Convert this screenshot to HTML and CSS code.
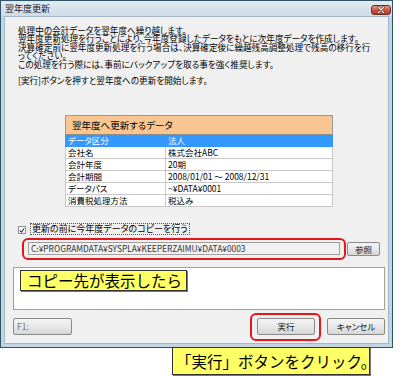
FILE: index.html
```html
<!DOCTYPE html>
<html lang="ja">
<head>
    <meta charset="UTF-8">
    <meta name="viewport" content="width=device-width, initial-scale=1.0">
    <title>翌年度更新</title>
    <link rel="stylesheet" href="styles.css">
</head>
<body>
    <div class="window">
        <div class="titlebar">
            <span class="title">翌年度更新</span>
            <span class="close">
                <svg width="20" height="10" viewBox="0 0 20 10">
                    <path d="M7 2 L13 8 M13 2 L7 8" stroke="#5a1a10" stroke-width="2.6" stroke-linecap="round"/>
                    <path d="M7 2 L13 8 M13 2 L7 8" stroke="#ffffff" stroke-width="1.4" stroke-linecap="round"/>
                </svg>
            </span>
        </div>

        <div class="client">
            <div class="intro">
                <p>処理中の会計データを翌年度へ繰り越します。</p>
                <p>翌年度更新処理を行うことにより、今年度登録したデータをもとに次年度データを作成します。</p>
                <p>決算確定前に翌年度更新処理を行う場合は、決算確定後に繰越残高調整処理で残高の移行を行</p>
                <p>ってください。</p>
                <p>この処理を行う際には、事前にバックアップを取る事を強く推奨します。</p>
                <p>&nbsp;</p>
                <p>[実行]ボタンを押すと翌年度への更新を開始します。</p>
            </div>

            <table class="data-table">
                <tr>
                    <th colspan="2">翌年度へ更新するデータ</th>
                </tr>
                <tr class="selected">
                    <td class="key">データ区分</td>
                    <td>法人</td>
                </tr>
                <tr>
                    <td class="key">会社名</td>
                    <td>株式会社ABC</td>
                </tr>
                <tr>
                    <td class="key">会計年度</td>
                    <td>20期</td>
                </tr>
                <tr>
                    <td class="key">会計期間</td>
                    <td>2008/01/01 ～ 2008/12/31</td>
                </tr>
                <tr>
                    <td class="key">データパス</td>
                    <td>~¥DATA¥0001</td>
                </tr>
                <tr>
                    <td class="key">消費税処理方法</td>
                    <td>税込み</td>
                </tr>
            </table>

            <div class="copy-row">
                <span class="checkbox">
                    <svg width="7" height="7" viewBox="0 0 7 7">
                        <path d="M1 3.5 L2.8 5.5 L6 1.2" fill="none" stroke="#222" stroke-width="1.3"/>
                    </svg>
                </span>
                <span class="copy-label">更新の前に今年度データのコピーを行う</span>
            </div>

            <div class="path-row">
                <div class="path-field">C:¥PROGRAMDATA¥SYSPLA¥KEEPERZAIMU¥DATA¥0003</div>
                <button class="button browse">参照</button>
            </div>

            <div class="message-box"></div>

            <div class="button-row">
                <button class="button f1">F1:</button>
                <div class="right-buttons">
                    <button class="button">実行</button>
                    <button class="button">キャンセル</button>
                </div>
            </div>
        </div>
    </div>

    <!-- annotations drawn over the screenshot -->
    <div class="ring ring-path"></div>
    <div class="ring ring-run"></div>
    <div class="callout callout-copy">コピー先が表示したら</div>
    <div class="callout callout-run">「実行」ボタンをクリック。</div>
</body>
</html>
```

FILE: styles.css
```css
body {
    margin: 0;
    padding: 0;
    background-color: #ffffff;
    font-family: "Noto Sans CJK JP", "Noto Sans", sans-serif;
    color: #000;
    position: relative;
    width: 400px;
    height: 376px;
    overflow: hidden;
}
.window {
    width: 393px;
    height: 348px;
    box-sizing: border-box;
    border: 1px solid #2c5566;
    background: #c4d4e4;
    padding: 0 3px 3px;
    display: flex;
    flex-direction: column;
}
.titlebar {
    height: 15px;
    display: flex;
    align-items: center;
    justify-content: space-between;
    background: linear-gradient(#e2e9f1, #cfdbe7);
    margin: 0 -3px;
    padding: 0 1px 0 4px;
}
.title {
    font-size: 9px;
    line-height: 9px;
    color: #1b1b1b;
    font-feature-settings: "palt";
}
.close {
    width: 20px;
    height: 10px;
    margin-top: 2px;
    box-sizing: border-box;
    border: 1px solid #6e2b20;
    border-radius: 3px;
    background: linear-gradient(#e3a08f, #c9573f 50%, #b53d26);
    display: flex;
    align-items: center;
    justify-content: center;
}
.close svg {
    display: block;
}
.client {
    flex: 1;
    background: #f0f0f0;
    border: 1px solid #a5b6c8;
    padding: 9px 3px 0 8px;
    display: flex;
    flex-direction: column;
}
.intro {
    margin-left: 5px;
    font-size: 8.6px;
    line-height: 8.4px;
    font-feature-settings: "palt";
    white-space: nowrap;
}
.intro p {
    margin: 0;
}
.data-table {
    margin-top: 30px;
    margin-left: 52px;
    width: 268px;
    border-collapse: collapse;
    border: 1px solid #9a9a9a;
    font-size: 8.5px;
    font-feature-settings: "palt";
}
.data-table th {
    height: 18px;
    padding: 0 0 0 6px;
    text-align: left;
    font-weight: normal;
    font-size: 9.5px;
    background-color: #f9c591;
    border-bottom: 1px solid #8d8d8d;
}
.data-table td {
    height: 11px;
    padding: 0 0 0 2px;
    line-height: 11px;
    background-color: #fff;
    border: 1px solid #c8c8c8;
    white-space: nowrap;
}
.data-table td.key {
    width: 97px;
}
.data-table tr.selected td {
    background-color: #3399ff;
    color: #fff;
    border-color: #3399ff;
}
.copy-row {
    margin-top: 16px;
    margin-left: 5px;
    height: 12px;
    display: flex;
    align-items: center;
    gap: 4px;
}
.checkbox {
    width: 8px;
    height: 8px;
    box-sizing: border-box;
    border: 1px solid #8e8f8f;
    background: #fff;
    display: flex;
    align-items: center;
    justify-content: center;
    margin-top: 3px;
}
.checkbox svg {
    display: block;
}
.copy-label {
    font-size: 9px;
    line-height: 10px;
    padding: 0 1px;
    border: 1px dotted #555;
    font-feature-settings: "palt";
}
.path-row {
    margin-top: 7px;
    margin-left: 15px;
    display: flex;
    align-items: center;
    gap: 7px;
}
.path-field {
    width: 312px;
    height: 13px;
    box-sizing: border-box;
    border: 1px solid #a0a0a0;
    background: #f0f0f0;
    font-size: 8.4px;
    line-height: 11px;
    padding-left: 2px;
    color: #333;
    white-space: nowrap;
    overflow: hidden;
}
.button {
    font-family: "Noto Sans CJK JP", "Noto Sans", sans-serif;
    font-size: 8.5px;
    line-height: 10px;
    height: 17px;
    padding: 0;
    border: 1px solid #8a8a8a;
    border-radius: 2px;
    background: linear-gradient(#f4f4f4, #e8e8e8 50%, #d6d6d6);
    color: #111;
    cursor: pointer;
    font-feature-settings: "palt";
}
.button:hover {
    background: linear-gradient(#eaf6fd, #d9f0fc 50%, #bee6fd);
}
.browse {
    width: 33px;
    height: 14px;
}
.message-box {
    margin-top: 11px;
    width: 372px;
    height: 43px;
    box-sizing: border-box;
    border: 1px solid #a0a0a0;
    background: #fff;
}
.button-row {
    margin-top: 8px;
    width: 372px;
    display: flex;
    justify-content: space-between;
}
.f1 {
    width: 59px;
    text-align: left;
    padding-left: 3px;
    color: #777;
}
.right-buttons {
    display: flex;
    gap: 12px;
}
.right-buttons .button {
    width: 58px;
}
.ring {
    position: absolute;
    border: 2px solid #e8141b;
    border-radius: 6px;
    box-sizing: border-box;
}
.ring-path {
    left: 22px;
    top: 238px;
    width: 324px;
    height: 22px;
}
.ring-run {
    left: 250px;
    top: 313px;
    width: 71px;
    height: 28px;
}
.callout {
    position: absolute;
    background: #ffff66;
    border: 1px solid #333;
    box-shadow: 1px 1px 0 #777;
    white-space: nowrap;
    color: #000;
}
.callout-copy {
    left: 20px;
    top: 270px;
    width: 167px;
    height: 21px;
    box-sizing: border-box;
    font-size: 15.5px;
    line-height: 19px;
    padding-left: 6px;
}
.callout-run {
    left: 172px;
    top: 347px;
    width: 198px;
    height: 28px;
    box-sizing: border-box;
    font-size: 15.5px;
    line-height: 26px;
    padding-left: 3px;
}
```
